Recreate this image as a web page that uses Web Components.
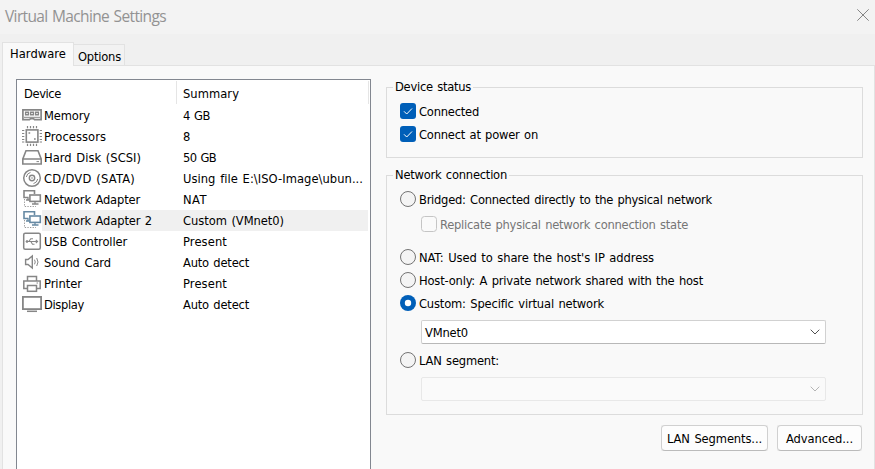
<!DOCTYPE html>
<html lang="en">
<head>
<meta charset="utf-8">
<title>Virtual Machine Settings</title>
<style>
html, body { margin: 0; height: 100%; overflow: hidden; }
body { font: 12.8px/16px "DejaVu Sans Condensed", "DejaVu Sans", "Noto Sans", sans-serif; color: #000; word-spacing: 1px; }
</style>
</head>
<body>
<vm-window></vm-window>
<script>
const define = (name, html, setup) => customElements.define(name, class extends HTMLElement {
  connectedCallback() {
    if (this.shadowRoot) return;
    this.attachShadow({ mode: 'open' }).innerHTML = html;
    if (setup) setup(this, this.shadowRoot);
  }
});

/* One-line text whose tracking is tuned so the line takes the width in `w`. */
customElements.define('fit-text', class extends HTMLElement {
  connectedCallback() {
    if (this.shadowRoot) return;
    const root = this.attachShadow({ mode: 'open' });
    root.innerHTML = '<style>:host{display:inline-block;white-space:pre}span{display:inline-block}</style><span></span>';
    const span = root.querySelector('span');
    span.textContent = this.getAttribute('t');
    const w = +this.getAttribute('w');
    if (w) {
      const natural = span.getBoundingClientRect().width;
      span.style.letterSpacing = (w - natural) / span.textContent.length + 'px';
    }
  }
});

const ICONS = {
  memory: '<path d="M.9 4.9H19.1V14.6H12.6L11.4 13.6H8.6L7.4 14.6H.9Z" stroke-width="1.7"/><path d="M3.6 7.2h2.8v2.6h-2.8zM8.6 7.2h2.8v2.6h-2.8zM13.6 7.2h2.8v2.6h-2.8z" stroke-width="1.4"/><path d="M2 12.3H18"/>',
  cpu: '<rect x="4.3" y="3.9" width="11.6" height="12.2" stroke-width="1.6"/><path stroke-width="1.2" d="M5.5 0V2.3M8.5 0V2.3M11.5 0V2.3M14.5 0V2.3M5.5 17.7V20M8.5 17.7V20M11.5 17.7V20M14.5 17.7V20M0 4.5H2.3M0 7.5H2.3M0 10.5H2.3M0 13.5H2.3M0 16H2.3M17.7 4.5H20M17.7 7.5H20M17.7 10.5H20M17.7 13.5H20M17.7 16H20"/><path d="M6.5 7h1.7M12 13h1.7" stroke-width="1.7"/>',
  disk: '<path d="M4 3.8H16L19.2 12V17H.8V12ZM.8 12H19.2" stroke-width="1.6"/><path d="M14.5 14.6H17"/>',
  disc: '<circle cx="10" cy="10" r="8.3" stroke-width="1.5"/><circle cx="10" cy="10" r="2.7" stroke-width="1.4"/><circle cx="10" cy="10" r=".8" fill="currentColor" stroke="none"/><path d="M4.3 9A5.8 5.8 0 0 1 8.5 4.4M15.7 11A5.8 5.8 0 0 1 11.5 15.6"/>',
  net: '<path d="M6.5 8.5H2V1.8H12.5V5" stroke-width="1.6"/><rect x="7.9" y="6" width="10.4" height="6.4" stroke-width="1.6"/><path d="M13 12.5V15M10 15H16.5M6 8.5V11M4 11H7.5" stroke-width="1.3"/><path d="M2.5 10V17.5H14" stroke="#999" stroke-dasharray="1.3 1.3"/>',
  usb: '<rect x="1.7" y="2.2" width="16.6" height="16" rx="1.5" stroke-width="1.5"/><path d="M4.5 10.5H15.5M13.8 8.8L15.6 10.5L13.8 12.2M6.8 10.5L8.8 7.7H11M8.8 10.5L10.5 13.2H12.5" stroke-width="1.1"/><circle cx="5" cy="10.5" r=".9" fill="currentColor"/>',
  sound: '<path d="M3.6 7.5H6L10.3 4V16L6 12.5H3.6Z" stroke-width="1.4"/><path d="M12.5 7.7Q14 10 12.5 12.3M14.7 6Q17.3 10 14.7 14"/>',
  printer: '<path d="M5.5 7.5V3.5H14.5V7.5M5 15.5H1.8V8H18.2V15.5H15" stroke-width="1.5"/><rect x="5.5" y="12.5" width="9" height="5.8" stroke-width="1.5"/><path d="M14.5 10H16"/>',
  display: '<rect x=".9" y="2.9" width="18.2" height="12.2" stroke-width="1.8"/><path d="M5 17.3H15" stroke-width="1.5"/>'
};
define('device-icon', '<style>:host{display:block;width:20px;height:21px;color:#868686}:host([selected]){color:#6689a3}svg{display:block}</style><svg width="20" height="21" fill="none" stroke="currentColor"></svg>');

define('device-row', `<style>
:host{display:grid;grid-template-columns:20px 1fr;height:21px;padding:0 0 0 5px;}
div{display:grid;grid-template-columns:139px 1fr;line-height:21px;padding-left:2px}
:host([selected]) div{background:#f0f0f0;margin-right:2px}
</style><device-icon></device-icon><div><slot></slot><slot name="summary"></slot></div>`,
  (el, r) => { const i = r.querySelector('device-icon');
    i.shadowRoot.querySelector('svg').innerHTML = ICONS[el.getAttribute('icon')];
    if (el.hasAttribute('selected')) i.setAttribute('selected', ''); });

const rows = [
  ['memory', 'Memory', 46, '4 GB', 27], ['cpu', 'Processors', 62, '8', 7],
  ['disk', 'Hard Disk (SCSI)', 97, '50 GB', 33], ['disc', 'CD/DVD (SATA)', 91, 'Using file E:\\ISO-Image\\ubun...', 180],
  ['net', 'Network Adapter', 96, 'NAT', 24], ['net', 'Network Adapter 2', 108, 'Custom (VMnet0)', 101],
  ['usb', 'USB Controller', 83, 'Present', 44], ['sound', 'Sound Card', 67, 'Auto detect', 66],
  ['printer', 'Printer', 38, 'Present', 44], ['display', 'Display', 40, 'Auto detect', 66]];
define('device-list', `<style>
:host{display:block;box-sizing:border-box;width:355px;height:400px;border:1px solid #828790;background:#fff}
header{display:grid;grid-template-columns:160px 192px;height:25px;box-sizing:border-box;padding:1px 0;line-height:25px}
header div{border-right:1px solid #e5e5e5;padding-left:6px;height:23px}
header div:first-child{padding-left:7px}
</style><header><div><fit-text t="Device" w="37"></fit-text></div><div><fit-text t="Summary" w="56"></fit-text></div></header>` +
rows.map((d, i) => `<device-row icon="${d[0]}"${i === 5 ? ' selected' : ''}><fit-text t="${d[1]}" w="${d[2]}"></fit-text><fit-text slot="summary" t="${d[3]}" w="${d[4]}"></fit-text></device-row>`).join(''));

define('tab-item', `<style>
:host{display:block;box-sizing:border-box;height:21px;width:51px;border:1px solid #e2e2e2;border-left:0;border-bottom:0;background:#f2f2f2;padding:3px 0 0 4px;line-height:17px}
:host([active]){height:24px;width:72px;border-left:1px solid #e2e2e2;background:#f9f9f9;padding:2px 0 0 7px;margin-bottom:-1px;z-index:1}
</style><slot></slot>`);

define('group-box', `<style>
:host{display:block;box-sizing:border-box}
fieldset{box-sizing:border-box;width:477px;height:100%;margin:0;padding:0 0 0 13px;border:1px solid #dcdcdc;min-width:0}
legend{margin-left:-7px;padding:0 2px;height:16px;line-height:16px}
</style><fieldset><legend><slot name="legend"></slot></legend><slot></slot></fieldset>`);

define('choice-item', `<style>
:host{display:flex;height:16px;gap:3px;line-height:17px}
:host([disabled]){color:#767676}
svg{display:block;flex:none}
</style><svg width="16" height="16"></svg><slot></slot>`, (el, r) => {
  const on = el.hasAttribute('checked');
  r.querySelector('svg').innerHTML = el.getAttribute('kind') === 'radio'
    ? (on ? '<circle cx="8" cy="8" r="8" fill="#005fb8"/><circle cx="8" cy="8" r="3.2" fill="#fff"/>'
          : '<circle cx="8" cy="8" r="7.5" fill="#f4f4f4" stroke="#737373"/>')
    : (on ? '<rect width="16" height="16" rx="3" fill="#005fb8"/><path d="M4 8.3L6.7 11L12 5.5" fill="none" stroke="#fff"/>'
          : '<rect x=".5" y=".5" width="15" height="15" rx="3" fill="#fafafa" stroke="#c5c5c5"/>');
});

define('combo-box', `<style>
:host{display:flex;box-sizing:border-box;width:405px;height:24px;border:1px solid #d1d1d1;border-bottom-color:#b8b8b8;border-radius:2px;background:#fff;align-items:center;justify-content:space-between;padding:0 5px 0 3px}
:host([disabled]){border-color:#e8e8e8;background:#fafafa;color:#aaa}
span{padding-top:1px}
svg{display:block;color:#505050}:host([disabled]) svg{color:#b5b5b5}
</style><span><slot></slot></span><svg width="10" height="6" fill="none" stroke="currentColor"><path d="M.7.7L5 5L9.3.7"/></svg>`);

define('push-button', `<style>
:host{display:block;background:#f0f0f0;padding:0}
button{display:block;box-sizing:border-box;width:100%;height:26px;border:1px solid #d0d0d0;border-bottom-color:#bbb;border-radius:4px;background:#fdfdfd;font:inherit;word-spacing:inherit;color:#000;padding:2px 0 0;margin:0}
</style><button><slot></slot></button>`);

define('title-bar', `<style>
:host{display:flex;box-sizing:border-box;height:34px;background:#f3f3f3;justify-content:space-between;align-items:flex-start;padding:6px 6px 0 5px;color:#929292;font:15.5px/20px "Open Sans","Noto Sans",sans-serif}
svg{display:block;margin-top:3px}
</style><fit-text t="Virtual Machine Settings" w="161"></fit-text><svg width="12" height="12" fill="none" stroke="#858585"><path d="M.3.3L11.7 11.7M11.7.3L.3 11.7"/></svg>`);

define('vm-window', `<style>
:host{display:flex;flex-direction:column;width:875px;height:469px;overflow:hidden;background:#f0f0f0}
nav{display:flex;align-items:flex-end;height:31px;padding-left:2px}
tab-item[active]{position:relative}
main{display:flex;flex:1;box-sizing:border-box;margin-left:2px;border:1px solid #e2e2e2;border-bottom:0;background:#f9f9f9;padding:13px 0 0 13px;gap:15px;min-height:0}
section{display:flex;flex-direction:column}
.status{height:79px;margin-bottom:9px}
.network{height:248px}
.stack{display:flex;flex-direction:column;align-items:flex-start}
.indent{margin-left:21px}
footer{display:flex;justify-content:flex-end;gap:9px;margin-top:10px;padding-right:1px}
</style>
<title-bar></title-bar>
<nav><tab-item active><fit-text t="Hardware" w="56"></fit-text></tab-item><tab-item><fit-text t="Options" w="43"></fit-text></tab-item></nav>
<main>
<device-list></device-list>
<section>
<group-box class="status"><fit-text slot="legend" t="Device status" w="76"></fit-text>
<div class="stack" style="gap:7px;padding-top:8px">
<choice-item checked><fit-text t="Connected" w="60"></fit-text></choice-item>
<choice-item checked><fit-text t="Connect at power on" w="119"></fit-text></choice-item></div></group-box>
<group-box class="network"><fit-text slot="legend" t="Network connection" w="112"></fit-text>
<div class="stack" style="padding-top:8px">
<choice-item kind="radio"><fit-text t="Bridged: Connected directly to the physical network" w="293"></fit-text></choice-item>
<choice-item class="indent" disabled style="margin-top:9px"><fit-text t="Replicate physical network connection state" w="248"></fit-text></choice-item>
<choice-item kind="radio" style="margin-top:17px"><fit-text t="NAT: Used to share the host's IP address" w="235"></fit-text></choice-item>
<choice-item kind="radio" style="margin-top:7px"><fit-text t="Host-only: A private network shared with the host" w="284"></fit-text></choice-item>
<choice-item kind="radio" checked style="margin-top:7px"><fit-text t="Custom: Specific virtual network" w="185"></fit-text></choice-item>
<combo-box class="indent" style="margin-top:9px"><fit-text t="VMnet0" w="43"></fit-text></combo-box>
<choice-item kind="radio" style="margin-top:8px"><fit-text t="LAN segment:" w="80"></fit-text></choice-item>
<combo-box class="indent" disabled style="margin-top:9px"></combo-box>
</div></group-box>
<footer><push-button style="width:107px"><fit-text t="LAN Segments..." w="95"></fit-text></push-button><push-button style="width:85px"><fit-text t="Advanced..." w="67"></fit-text></push-button></footer>
</section>
</main>`);
</script>
</body>
</html>
